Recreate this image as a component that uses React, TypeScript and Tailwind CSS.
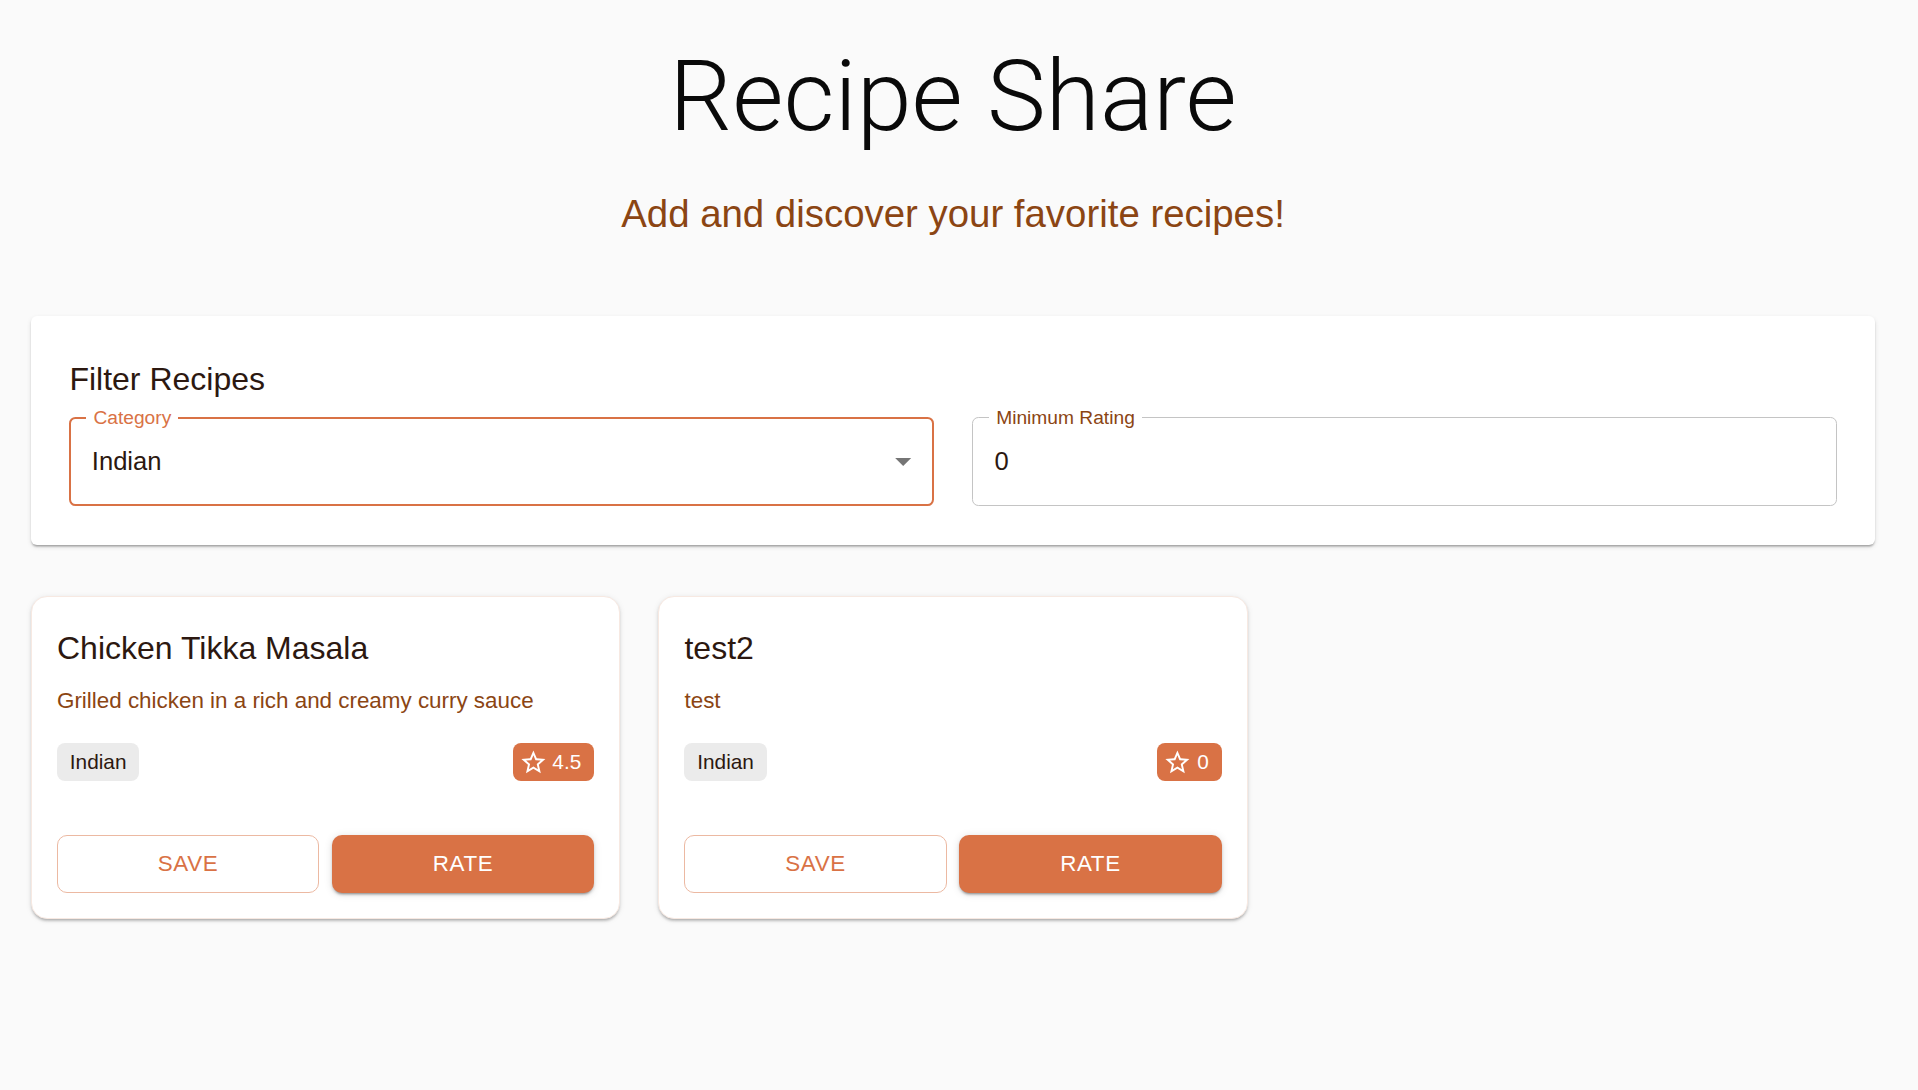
import React from 'react';

type Recipe = {
  title: string;
  description: string;
  category: string;
  rating: string;
};

const recipes: Recipe[] = [
  {
    title: 'Chicken Tikka Masala',
    description: 'Grilled chicken in a rich and creamy curry sauce',
    category: 'Indian',
    rating: '4.5',
  },
  { title: 'test2', description: 'test', category: 'Indian', rating: '0' },
];

// outlined star, same shape as the material StarBorder icon
function StarIcon() {
  return (
    <svg viewBox="0 0 24 24" className="w-[28.8px] h-[28.8px] fill-white shrink-0">
      <path d="M22 9.24l-7.19-.62L12 2 9.19 8.63 2 9.24l5.46 4.73L5.82 21 12 17.27 18.18 21l-1.63-7.03L22 9.24zM12 15.4l-3.76 2.27 1-4.28-3.32-2.88 4.38-.38L12 6.1l1.71 4.04 4.38.38-3.32 2.88 1 4.28L12 15.4z" />
    </svg>
  );
}

function RecipeCard({ recipe }: { recipe: Recipe }) {
  return (
    <div className="bg-white rounded-[16px] border border-[#f7e9e2] shadow-[0_3px_3px_-2px_rgba(0,0,0,0.2),0_2px_3px_0_rgba(0,0,0,0.12),0_1px_6px_0_rgba(0,0,0,0.08)] p-[25px] flex flex-col">
      <h3 className="text-[32px] leading-[51.2px] text-[#2c1810] mt-[1px] mb-[11.2px]">{recipe.title}</h3>
      <p className="text-[22.4px] leading-[32px] text-[#8b4513] mb-[25.6px]">{recipe.description}</p>
      <div className="flex items-center justify-between h-[38.4px]">
        <span className="h-[38.4px] flex items-center px-[12.8px] rounded-[8px] bg-[#ebebeb] text-[20.8px] text-[#2c1810]">
          {recipe.category}
        </span>
        <span className="h-[38.4px] flex items-center pl-[6px] pr-[12.8px] rounded-[8px] bg-[#d97245] text-[20.8px] text-white">
          <StarIcon />
          <span className="pl-[5px]">{recipe.rating}</span>
        </span>
      </div>
      <div className="grid grid-cols-2 gap-[12.8px] mt-[54px]">
        <button className="h-[57.6px] rounded-[10px] border border-[#ecb9a2] bg-white text-[#d97245] text-[22.4px] tracking-[0.64px] uppercase">
          Save
        </button>
        <button className="h-[57.6px] rounded-[10px] bg-[#d97245] text-white text-[22.4px] tracking-[0.64px] uppercase shadow-[0_3px_2px_-2px_rgba(0,0,0,0.25),0_2px_3px_0_rgba(0,0,0,0.16),0_1px_8px_0_rgba(0,0,0,0.12)]">
          Rate
        </button>
      </div>
    </div>
  );
}

export default function App() {
  return (
    <div className="min-h-[1090px] bg-[#fafafa] pl-[31px] pr-[43px] pt-[39px] font-['Liberation_Sans',Arial,sans-serif]">
      <h1 className="text-center text-[99px] leading-[115.2px] font-light font-['Roboto','Liberation_Sans',sans-serif] text-[#0a0a0a] mb-[33.6px]">
        Recipe Share
      </h1>
      <p className="text-center text-[38.4px] leading-[51.2px] text-[#8b4513] mb-[76.8px]">
        Add and discover your favorite recipes!
      </p>

      {/* filter panel */}
      <div className="bg-white rounded-[6px] p-[38.4px] shadow-[0_3px_2px_-2px_rgba(0,0,0,0.2),0_2px_2px_0_rgba(0,0,0,0.14),0_2px_5px_0_rgba(0,0,0,0.1)]">
        <h2 className="text-[32px] leading-[51.2px] text-[#2c1810] mb-[11.2px]">Filter Recipes</h2>
        <div className="grid grid-cols-2 gap-[38.4px]">
          <div className="relative h-[89.6px] rounded-[6.4px] border-2 border-[#d97245] flex items-center pl-[20.4px] pr-[9px]">
            <span className="absolute -top-[13px] left-[15px] px-[7px] bg-white text-[19.2px] leading-[23px] text-[#d97245]">
              Category
            </span>
            <span className="flex-1 text-[25.6px] text-[#2c1810]">Indian</span>
            <svg viewBox="0 0 24 24" className="w-[38.4px] h-[38.4px] fill-[#757575]">
              <path d="M7 10l5 5 5-5z" />
            </svg>
          </div>
          <div className="relative h-[89.6px] rounded-[6.4px] border border-[#c4c4c4] flex items-center pl-[21.4px]">
            <span className="absolute -top-[12px] left-[16px] px-[7px] bg-white text-[19.2px] leading-[23px] text-[#8b4513]">
              Minimum Rating
            </span>
            <span className="text-[25.6px] text-[#2c1810]">0</span>
          </div>
        </div>
      </div>

      {/* recipe cards */}
      <div className="grid grid-cols-3 gap-[38.4px] mt-[51.2px]">
        {recipes.map((recipe, index) => (
          <RecipeCard key={index} recipe={recipe} />
        ))}
      </div>
    </div>
  );
}
